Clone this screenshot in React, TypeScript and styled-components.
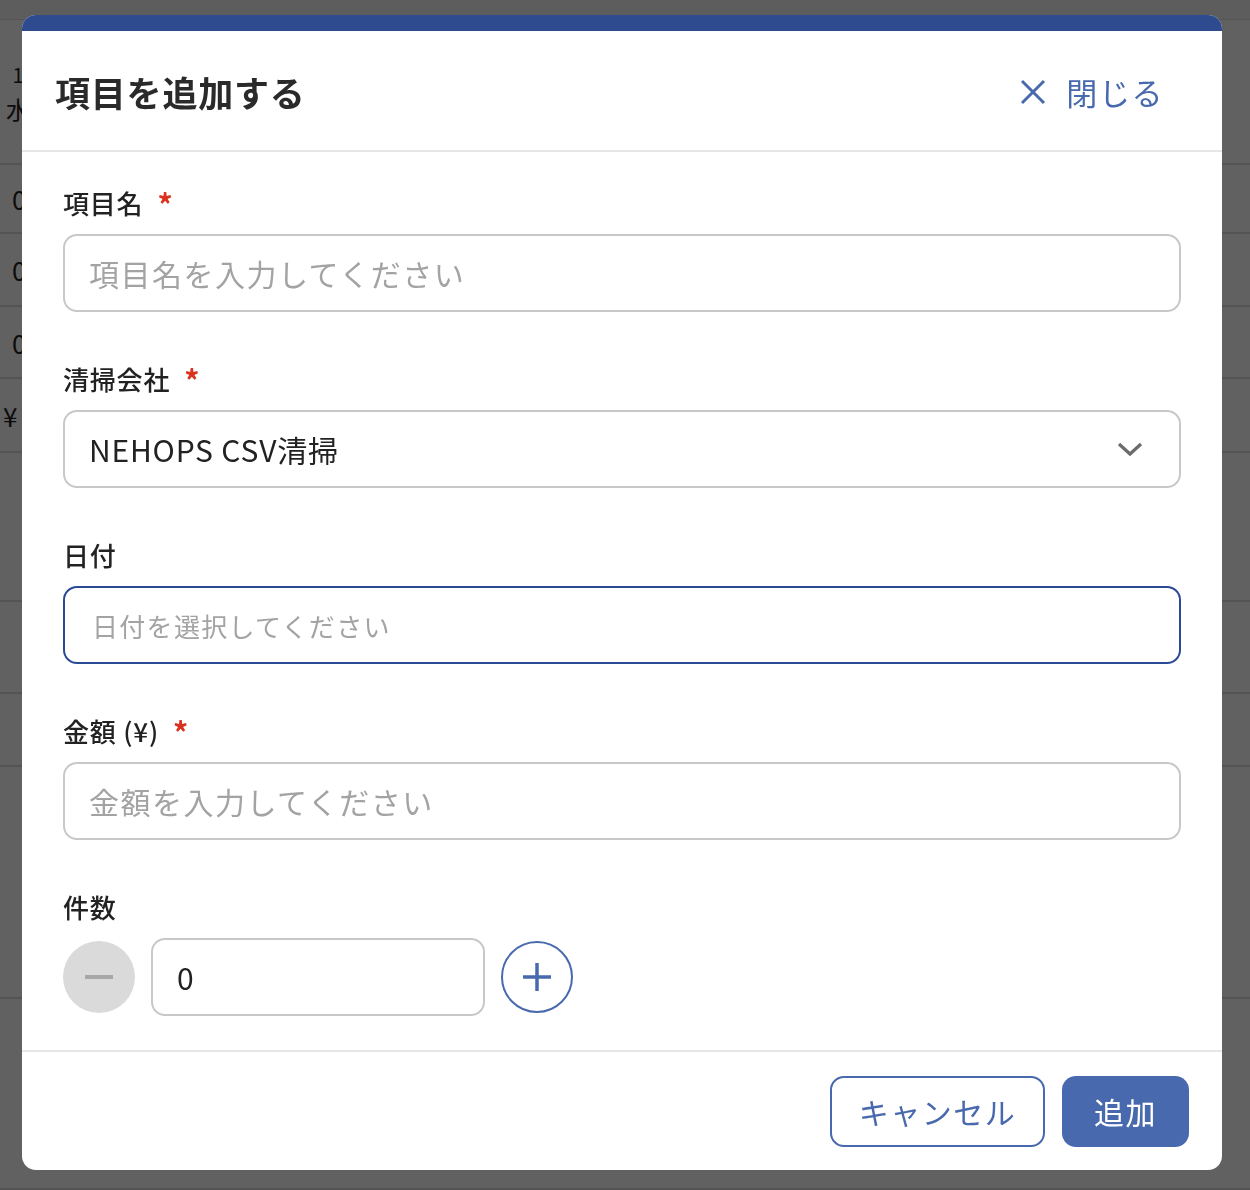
import styled, { createGlobalStyle } from 'styled-components';

const GlobalStyle = createGlobalStyle`
  * {
    box-sizing: border-box;
  }

  body {
    margin: 0;
    font-family: 'Noto Sans CJK JP', 'Noto Sans', sans-serif;
    background: #ffffff;
  }
`;

const blue = '#4869ad';

const pageRows = [
  { height: 145, day: '1', week: '水' },
  { height: 69, value: '0', indent: 12 },
  { height: 73, value: '0', indent: 12 },
  { height: 72, value: '0', indent: 12 },
  { height: 74, value: '¥', indent: 3 },
  { height: 149 },
  { height: 92 },
  { height: 73 },
  { height: 232 },
  { height: 191 },
];

function CloseIcon() {
  return (
    <svg width="26" height="26" viewBox="0 0 26 26" fill="none">
      <path d="M2 2 L24 24 M24 2 L2 24" stroke={blue} strokeWidth="3" strokeLinecap="butt" />
    </svg>
  );
}

function ChevronDown() {
  return (
    <svg width="26" height="16" viewBox="0 0 26 16" fill="none">
      <polyline points="2,3 13,13 24,3" stroke="#6b6b6b" strokeWidth="3.2" />
    </svg>
  );
}

function MinusIcon() {
  return (
    <svg width="30" height="6" viewBox="0 0 30 6" fill="none">
      <line x1="1" y1="3" x2="29" y2="3" stroke="#a8a8a8" strokeWidth="4" />
    </svg>
  );
}

function PlusIcon() {
  return (
    <svg width="30" height="30" viewBox="0 0 30 30" fill="none">
      <path d="M15 1 V29 M1 15 H29" stroke={blue} strokeWidth="3.5" />
    </svg>
  );
}

function AddItemModal() {
  return (
    <>
      <GlobalStyle />
      <StPage>
        <StTopStrip />
        {pageRows.map((row, i) => (
          <StPageRow key={i} $height={row.height} $indent={row.indent ?? 12}>
            {row.day && (
              <StDayCell>
                <span>{row.day}</span>
                <span>{row.week}</span>
              </StDayCell>
            )}
            {row.value && <StValueCell>{row.value}</StValueCell>}
          </StPageRow>
        ))}
      </StPage>

      <StOverlay>
        <StModal role="dialog">
          <StModalBar />
          <StHeader>
            <h1>項目を追加する</h1>
            <StCloseButton>
              <CloseIcon />
              <span>閉じる</span>
            </StCloseButton>
          </StHeader>

          <StBody>
            <StField>
              <StLabel>
                項目名<StRequired>*</StRequired>
              </StLabel>
              <StInput placeholder="項目名を入力してください" />
            </StField>

            <StField>
              <StLabel>
                清掃会社<StRequired>*</StRequired>
              </StLabel>
              <StSelect>
                <span>NEHOPS CSV清掃</span>
                <ChevronDown />
              </StSelect>
            </StField>

            <StField>
              <StLabel>日付</StLabel>
              <StInput $focused $small placeholder="日付を選択してください" />
            </StField>

            <StField>
              <StLabel>
                金額 (¥)<StRequired>*</StRequired>
              </StLabel>
              <StInput placeholder="金額を入力してください" />
            </StField>

            <StField>
              <StLabel>件数</StLabel>
              <StCounter>
                <StRoundButton $variant="disabled">
                  <MinusIcon />
                </StRoundButton>
                <StCountInput defaultValue="0" />
                <StRoundButton $variant="outline">
                  <PlusIcon />
                </StRoundButton>
              </StCounter>
            </StField>
          </StBody>

          <StFooter>
            <StCancelButton>キャンセル</StCancelButton>
            <StSubmitButton>追加</StSubmitButton>
          </StFooter>
        </StModal>
      </StOverlay>
    </>
  );
}

export default AddItemModal;

const StPage = styled.div`
  display: flex;
  flex-direction: column;

  width: 1250px;
  min-height: 1190px;

  color: #222222;
`;

const StTopStrip = styled.div`
  height: 20px;
  background: #f4f4f4;
  border-bottom: 1px solid #dcdcdc;
`;

const StPageRow = styled.div<{ $height: number; $indent: number }>`
  display: flex;
  align-items: center;

  height: ${(props) => props.$height}px;
  padding-left: ${(props) => props.$indent}px;

  border-bottom: 2px solid #dedede;
  font-size: 24px;
`;

const StDayCell = styled.div`
  display: flex;
  flex-direction: column;
  align-items: center;

  margin-left: -6px;
  line-height: 34px;

  & > span:first-child {
    font-size: 20px;
  }
`;

const StValueCell = styled.div`
  font-size: 26px;
`;

const StOverlay = styled.div`
  position: fixed;
  inset: 0;

  display: flex;
  align-items: flex-start;

  padding: 15px 0 0 22px;

  background: rgba(0, 0, 0, 0.62);
`;

const StModal = styled.div`
  display: flex;
  flex-direction: column;

  width: 1200px;
  height: 1155px;
  overflow: hidden;

  border-radius: 14px;
  background: #ffffff;
  letter-spacing: 0.05em;
`;

const StModalBar = styled.div`
  height: 16px;
  background: #2e4b90;
`;

const StHeader = styled.header`
  display: flex;
  justify-content: space-between;
  align-items: center;

  height: 121px;
  padding: 2px 58px 0 33px;

  border-bottom: 2px solid #e6e6e6;

  & > h1 {
    margin: 0;

    color: #2a2a2a;
    font-size: 35px;
    font-weight: 700;
  }
`;

const StCloseButton = styled.button`
  display: flex;
  align-items: center;
  gap: 20px;

  padding: 0;

  border: none;
  background: transparent;
  color: ${blue};
  font-family: inherit;
  font-size: 31px;
  letter-spacing: 0.05em;
`;

const StBody = styled.div`
  display: flex;
  flex-direction: column;
  gap: 48px;

  padding: 32px 41px 34px;
  flex: 1;
`;

const StField = styled.div`
  display: flex;
  flex-direction: column;
  gap: 14px;
`;

const StLabel = styled.label`
  display: flex;
  align-items: center;

  height: 36px;

  color: #222222;
  font-size: 26px;
  font-weight: 500;
`;

const StRequired = styled.span`
  margin-left: 14px;
  margin-top: 2px;

  color: #d9321f;
  font-size: 30px;
  font-weight: 700;
`;

const StInput = styled.input<{ $focused?: boolean; $small?: boolean }>`
  width: 100%;
  height: 78px;
  padding: 0 ${(props) => (props.$small ? 27 : 24)}px;

  border: 2px solid ${(props) => (props.$focused ? '#2b4a95' : '#c8c8c8')};
  border-radius: 14px;
  outline: none;
  background: #ffffff;
  color: #222222;
  font-family: inherit;
  font-size: ${(props) => (props.$small ? 26 : 30)}px;
  letter-spacing: 0.05em;

  &::placeholder {
    color: #a3a3a3;
  }
`;

const StSelect = styled.div`
  display: flex;
  justify-content: space-between;
  align-items: center;

  height: 78px;
  padding: 0 36px 0 24px;

  border: 2px solid #c8c8c8;
  border-radius: 14px;
  color: #222222;
  font-size: 30px;
`;

const StCounter = styled.div`
  display: flex;
  align-items: center;
  gap: 16px;
`;

const StRoundButton = styled.button<{ $variant: 'disabled' | 'outline' }>`
  display: flex;
  justify-content: center;
  align-items: center;

  width: 72px;
  height: 72px;
  padding: 0;

  border-radius: 50%;
  border: ${(props) => (props.$variant === 'outline' ? `2px solid ${blue}` : 'none')};
  background: ${(props) => (props.$variant === 'outline' ? '#ffffff' : '#dadada')};
`;

const StCountInput = styled.input`
  width: 334px;
  height: 78px;
  padding: 0 24px;

  border: 2px solid #c8c8c8;
  border-radius: 14px;
  outline: none;
  color: #222222;
  font-family: inherit;
  font-size: 30px;
`;

const StFooter = styled.footer`
  display: flex;
  justify-content: flex-end;
  align-items: center;
  gap: 17px;

  height: 120px;
  padding: 0 33px 0 0;

  border-top: 2px solid #e6e6e6;
`;

const StCancelButton = styled.button`
  width: 215px;
  height: 71px;

  border: 2px solid ${blue};
  border-radius: 14px;
  background: #ffffff;
  color: ${blue};
  font-family: inherit;
  font-size: 30px;
  letter-spacing: 0.05em;
`;

const StSubmitButton = styled.button`
  width: 127px;
  height: 71px;

  border: none;
  border-radius: 14px;
  background: ${blue};
  color: #ffffff;
  font-family: inherit;
  font-size: 30px;
  letter-spacing: 0.05em;
`;
